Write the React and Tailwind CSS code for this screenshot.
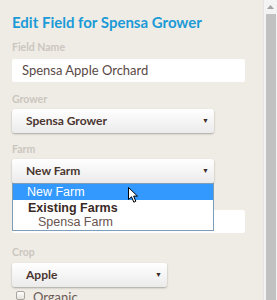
import React from 'react';

const Label = ({ children, className = '' }) => (
  <p className={`font-['Lato',sans-serif] font-bold text-[10.5px] leading-[12px] text-[#cbc6bf] ${className}`}>{children}</p>
);

const Select = ({ value, width }) => (
  <div className={`${width} h-[24px] flex items-center justify-between pl-[14px] pr-[5px] rounded-[3px] bg-gradient-to-b from-white to-[#ebebeb] shadow-[0_1px_2px_rgba(0,0,0,0.3)]`}>
    <span className="font-['Lato',sans-serif] font-bold text-[12px] text-[#4a3530]">{value}</span>
    <span className="text-[7px] text-[#3d2c28]">▼</span>
  </div>
);

const Cursor = () => (
  <svg width="12" height="17" viewBox="0 0 12 17" className="absolute left-[115px] top-[3px]">
    <path d="M0.5 0.5 L0.5 12.5 L3.5 9.8 L5.8 15.2 L7.8 14.3 L5.6 9.1 L9.5 9.1 Z" fill="#fff" stroke="#000" strokeWidth="1" strokeLinejoin="round" />
  </svg>
);

const App = () => {
  return (
    <div className="w-[277px] h-[300px] overflow-hidden flex bg-[#efece5]">
      <div className="flex-1 pl-[12px] pr-[18px] pt-[13px]">
        <h1 className="font-['Lato',sans-serif] font-bold text-[15px] leading-[18px] text-[#1b9ad7] whitespace-nowrap">
          Edit Field for Spensa Grower
        </h1>
        <Label className="mt-[10px]">Field Name</Label>
        <div className="mt-[6px] w-[233px] h-[23px] bg-white rounded-[2px] flex items-center pl-[10px]">
          <span className="font-['Lato',sans-serif] text-[13px] text-[#5a4945]">Spensa Apple Orchard</span>
        </div>
        <Label className="mt-[11px]">Grower</Label>
        <div className="mt-[4px]">
          <Select value="Spensa Grower" width="w-[202px]" />
        </div>
        <Label className="mt-[10px]">Farm</Label>
        <div className="mt-[4px] relative">
          <Select value="New Farm" width="w-[202px]" />
          <div className="absolute left-0 top-[24px] w-[202px] bg-white border border-[#7f9db9] z-10 font-['Liberation_Sans',Arial,sans-serif] text-[12.5px] leading-[14px]">
            <div className="relative h-[16px] bg-[#3399ff] text-white pl-[14px] flex items-center">
              New Farm
              <Cursor />
            </div>
            <div className="pl-[15px] pt-[1px] font-bold text-[#3b2a26]">Existing Farms</div>
            <div className="pl-[25px] pb-[1px] text-[#6a5450]">Spensa Farm</div>
          </div>
          <div className="mt-[27px] w-[233px] h-[23px] bg-white rounded-[2px]" />
        </div>
        <Label className="mt-[13px]">Crop</Label>
        <div className="mt-[5px]">
          <Select value="Apple" width="w-[155px]" />
        </div>
        <div className="mt-[3px] flex items-start gap-[8px] pl-[4px]">
          <div className="mt-[1px] w-[9px] h-[9px] border border-[#a9a49d] rounded-[2px] bg-gradient-to-b from-white to-[#e6e2dc]" />
          <span className="font-['Lato',sans-serif] text-[13px] leading-[14px] text-[#6b5b55]">Organic</span>
        </div>
      </div>
      <div className="w-[14px] h-full bg-[#f3f3f3] border-l border-[#e4e4e4] flex flex-col">
        <div className="h-[14px] flex items-center justify-center">
          <svg width="7" height="4" viewBox="0 0 7 4"><path d="M0 4 L3.5 0 L7 4 Z" fill="#a3a3a3" /></svg>
        </div>
        <div className="flex-1 ml-[2px] mr-[1px] bg-[#c1c1c1]" />
      </div>
    </div>
  );
};

export default App;
